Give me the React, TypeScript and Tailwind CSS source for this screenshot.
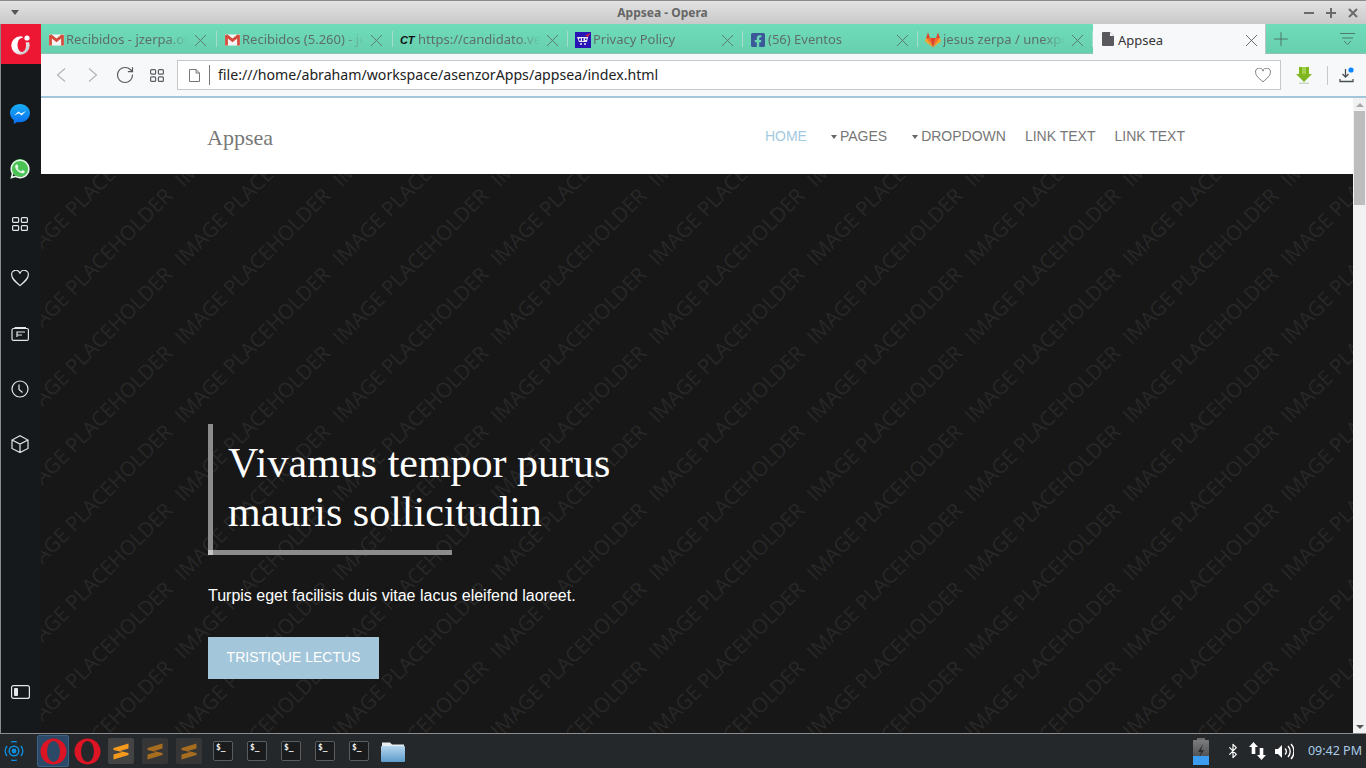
import { Bluetooth, Plus, RotateCw, X } from 'lucide-react'
import { FaFacebookSquare, FaWhatsapp } from 'react-icons/fa'

const chrome = "font-['Noto_Sans',sans-serif]"

function GmailIcon() {
  return (
    <svg width="15" height="12" viewBox="0 0 16 13">
      <rect x="0" y="0.5" width="16" height="12" fill="#f4f4f4" />
      <path d="M0 1 L2.5 .5 L8 5 L13.5 .5 L16 1 V12.5 H13 V5 L8 9 L3 5 V12.5 H0 Z" fill="#d54b3d" />
    </svg>
  )
}

function CtIcon() {
  return <span className="font-['Liberation_Sans',sans-serif] font-bold italic text-[11px] leading-none text-[#111] tracking-tight w-[16px]">CT</span>
}

function PrivacyIcon() {
  return (
    <svg width="16" height="16" viewBox="0 0 16 16">
      <rect width="16" height="16" fill="#2a13b4" />
      <path d="M2 5 H13 L12 10 H4 Z" fill="#e8e8f4" />
      <path d="M4 6.5 H6 V8.5 H4 Z M7 6 H8.5 V9 H7 Z M10 6.5 H11.5 V8 H10 Z" fill="#2a13b4" />
      <path d="M10 3.5 L15.5 1 L13 5 Z" fill="#d02a3c" />
      <circle cx="6" cy="12" r="1" fill="#e8e8f4" />
      <circle cx="10" cy="12" r="1" fill="#e8e8f4" />
    </svg>
  )
}

function GitlabIcon() {
  return (
    <svg width="16" height="16" viewBox="0 0 16 16">
      <polygon points="8,15.5 5,6 11,6" fill="#e24329" />
      <polygon points="8,15.5 5,6 1,6" fill="#fc6d26" />
      <polygon points="8,15.5 11,6 15,6" fill="#fc6d26" />
      <polygon points="1,6 0,9.2 8,15.5" fill="#fca326" />
      <polygon points="15,6 16,9.2 8,15.5" fill="#fca326" />
      <polygon points="1,6 3,.5 5,6" fill="#e24329" />
      <polygon points="15,6 13,.5 11,6" fill="#e24329" />
    </svg>
  )
}

function PageIcon({ fill = '#5a5a5e' }: { fill?: string }) {
  return (
    <svg width="12" height="14" viewBox="0 0 12 14" className="-mt-[3px]">
      <path d="M1 0 H8 L12 4 V13 a1 1 0 0 1 -1 1 H1 a1 1 0 0 1 -1 -1 V1 a1 1 0 0 1 1 -1 Z" fill={fill} />
      <path d="M8 0 V4 H12" fill="#f7f8fa" />
    </svg>
  )
}

const tabs = [
  { title: 'Recibidos - jzerpa.ocanto@gmail', icon: <GmailIcon />, w: 'w-[176px]' },
  { title: 'Recibidos (5.260) - jesus', icon: <GmailIcon />, w: 'w-[176px]' },
  { title: 'https://candidato.venezuela', icon: <CtIcon />, w: 'w-[175px]' },
  { title: 'Privacy Policy', icon: <PrivacyIcon />, w: 'w-[175px]' },
  { title: '(56) Eventos', icon: <FaFacebookSquare className="text-[#3b5998] w-[16px] h-[16px]" />, w: 'w-[175px]' },
  { title: 'jesus zerpa / unexpo-web', icon: <GitlabIcon />, w: 'w-[175px]' },
]

function Tab({ title, icon, w }: { title: string; icon: React.ReactNode; w: string }) {
  return (
    <div className={`${w} h-full flex items-center pl-[7px] pt-[3px] relative shrink-0`}>
      <div className="w-[16px] h-[16px] flex items-center justify-center shrink-0">{icon}</div>
      <div className="w-[122px] ml-[2px] text-[13px] text-[#5d6f68] whitespace-nowrap overflow-hidden [mask-image:linear-gradient(to_right,black_82%,transparent)]">{title}</div>
      <X className="ml-[2px] text-[#5c6f68] w-[21px] h-[21px] shrink-0" strokeWidth={1} />
      <div className="absolute right-0 top-[7px] h-[16px] w-px bg-[#a6dcc8]" />
    </div>
  )
}

function TabStrip() {
  return (
    <div className="h-[30px] flex bg-gradient-to-b from-[#70dcba] to-[#66cfae] border-b border-[#8fc4b2]">
      {tabs.map((t) => <Tab key={t.title} {...t} />)}
      <div className="w-[173px] h-[30px] bg-[#f7f8fa] flex items-center pl-[9px] pt-[3px] border-r border-[#b9c4c0] shrink-0">
        <PageIcon />
        <span className="ml-[4px] w-[123px] text-[13px] text-[#333]">Appsea</span>
        <X className="text-[#5a5a5a] w-[21px] h-[21px] shrink-0" strokeWidth={1} />
      </div>
      <div className="flex-1 flex items-center pl-[4px] pr-[11px] justify-between">
        <Plus className="text-[#4f6a60] w-[22px] h-[22px]" strokeWidth={1} />
        <svg width="15" height="14" viewBox="0 0 15 14" fill="none" stroke="#4f7a6b" strokeWidth="1">
          <path d="M0 1.5 H15 M2 6 H13 M4 9 L7.500 12.500 L11 9" />
        </svg>
      </div>
    </div>
  )
}

function Toolbar() {
  return (
    <div className="h-[42px] bg-[#f7f8fa] flex items-center pl-[4px]">
      <div className="w-[32px] flex justify-center">
        <svg width="10" height="14" viewBox="0 0 10 14" fill="none" stroke="#b0b5b8" strokeWidth="1.200"><path d="M9 .5 L1.500 7 L9 13.500" /></svg>
      </div>
      <div className="w-[32px] flex justify-center">
        <svg width="10" height="14" viewBox="0 0 10 14" fill="none" stroke="#b0b5b8" strokeWidth="1.200"><path d="M1 .5 L8.500 7 L1 13.500" /></svg>
      </div>
      <div className="w-[32px] flex justify-center"><RotateCw className="w-[20px] h-[20px] text-[#55595c]" strokeWidth={1.4} /></div>
      <div className="w-[32px] flex justify-center">
        <svg width="14" height="13" viewBox="0 0 14 13" fill="none" stroke="#5a5e62" strokeWidth="1.200">
          <rect x=".6" y=".6" width="5" height="4.600" rx="1" /><rect x="8.400" y=".6" width="5" height="4.600" rx="1" />
          <rect x=".6" y="7.800" width="5" height="4.600" rx="1" /><rect x="8.400" y="7.800" width="5" height="4.600" rx="1" />
        </svg>
      </div>
      <div className="ml-[4px] w-[1104px] h-[30px] bg-white border border-[#c6c9c9] flex items-center pl-[11px] pr-[9px]">
        <svg width="11" height="13" viewBox="0 0 11 13" fill="none" stroke="#777" strokeWidth="1">
          <path d="M.5 .5 H7 L10.500 4 V12.500 H.5 Z M7 .5 V4 H10.500" />
        </svg>
        <div className="w-px h-[20px] bg-[#777] ml-[9px]" />
        <span className="ml-[8px] mb-[1px] text-[14.150px] text-[#222] flex-1">file:///home/abraham/workspace/asenzorApps/appsea/index.html</span>
        <svg width="16" height="15" viewBox="0 0 24 22" fill="none" stroke="#6b6b6b" strokeWidth="1.300">
          <path d="M12 20.500 C5 14.500 1 11 1 6.800 A5.500 5.500 0 0 1 12 4.500 A5.500 5.500 0 0 1 23 6.800 C23 11 19 14.500 12 20.500 Z" />
        </svg>
      </div>
      <div className="w-[46px] flex justify-center">
        <svg width="16" height="17" viewBox="0 0 16 17">
          <path d="M3 0 H13 V7 H16 L8 15 L0 7 H3 Z" fill="#7fb521" />
          <path d="M6 0 H10 V7 H6 Z" fill="#a5cf4e" />
          <rect x="3" y="15.500" width="10" height="1.500" fill="#cfd6c0" />
        </svg>
      </div>
      <div className="w-px h-[19px] bg-[#c5c9c9]" />
      <div className="ml-[11px]">
        <svg width="15" height="16" viewBox="0 0 15 16" fill="none" stroke="#4a4f52" strokeWidth="1.300">
          <path d="M6.500 2 V10 M3.500 7 L6.500 10 L9.500 7 M1 12 V14.500 H14 V12" />
          <circle cx="12" cy="3" r="2.600" fill="#0a84ff" stroke="none" />
        </svg>
      </div>
    </div>
  )
}

const sideStroke = { fill: 'none', stroke: '#e4e6e7', strokeWidth: 1.2 }

function Sidebar() {
  return (
    <div className="w-[40px] ml-px bg-[#15191c] flex flex-col shrink-0">
      <div className="h-[40px] bg-[#ee1733] -mr-px pr-[2px] flex items-center justify-center">
        <svg width="20" height="21" viewBox="0 0 20 21">
          <defs><linearGradient id="om" x1="0" y1="0" x2="1" y2="1"><stop offset="0.5" stopColor="#ffffff" /><stop offset="1" stopColor="#a8a8a8" /></linearGradient></defs>
          <circle cx="9.500" cy="11.500" r="9.200" fill="url(#om)" />
          <ellipse cx="10.800" cy="11" rx="4.300" ry="7" fill="#ee1733" />
          <circle cx="16" cy="4" r="4.500" fill="#ee1733" />
          <circle cx="16" cy="4" r="2.600" fill="#fff" />
        </svg>
      </div>
      <div className="flex-1 flex flex-col items-center pt-[22px] pb-[14px] pr-[2px]">
        <div className="h-[55px] flex items-center">
          <svg width="20" height="20" viewBox="0 0 20 20">
            <defs><linearGradient id="ms" x1="0" y1="0" x2="0" y2="1"><stop offset="0" stopColor="#19aff5" /><stop offset="1" stopColor="#0a6cf0" /></linearGradient></defs>
            <path d="M10 0 C4.500 0 0 4 0 9 C0 12 1.500 14.500 3.800 16 V20 L7.300 18 C8.200 18.200 9 18.300 10 18.300 C15.500 18.300 20 14 20 9 C20 4 15.500 0 10 0 Z" fill="url(#ms)" />
            <path d="M4 11.500 L8.500 7.500 L11 9.500 L16 7 L11.500 11.500 L9 9.300 Z" fill="#fff" />
          </svg>
        </div>
        <div className="h-[55px] flex items-center relative">
          <div className="absolute left-[2px] top-[18px] w-[18px] h-[18px] rounded-full bg-[#48c354]" />
          <FaWhatsapp className="relative w-[22px] h-[22px] text-[#e8f5e9]" />
        </div>
        <div className="h-[55px] flex items-center">
          <svg width="16" height="14" viewBox="0 0 16 14" {...sideStroke}>
            <rect x=".6" y=".6" width="6" height="4.800" rx="1" /><rect x="9.400" y=".6" width="6" height="4.800" rx="1" />
            <rect x=".6" y="8.600" width="6" height="4.800" rx="1" /><rect x="9.400" y="8.600" width="6" height="4.800" rx="1" />
          </svg>
        </div>
        <div className="h-[55px] flex items-center">
          <svg width="18" height="17" viewBox="0 0 24 22" {...sideStroke} strokeWidth={1.600}>
            <path d="M12 20.500 C5 14.500 1 11 1 6.800 A5.500 5.500 0 0 1 12 4.500 A5.500 5.500 0 0 1 23 6.800 C23 11 19 14.500 12 20.500 Z" />
          </svg>
        </div>
        <div className="h-[55px] flex items-center">
          <svg width="18" height="14" viewBox="0 0 18 14" {...sideStroke}>
            <rect x="1" y="1.500" width="16.400" height="11.900" rx="1.500" />
            <path d="M3.500 .6 H15 M6 5 H14 M6 8 H11 M6 4.500 V10" />
          </svg>
        </div>
        <div className="h-[55px] flex items-center">
          <svg width="18" height="18" viewBox="0 0 18 18" {...sideStroke}>
            <circle cx="9" cy="9" r="8" /><path d="M8 4.500 V9.500 L11.500 12.500" />
          </svg>
        </div>
        <div className="h-[55px] flex items-center">
          <svg width="18" height="18" viewBox="0 0 18 18" {...sideStroke}>
            <path d="M9 .8 L17 5 V13.500 L9 17.500 L1 13.500 V5 Z M1 5 L9 9 L17 5 M9 9 V17.500" />
          </svg>
        </div>
        <div className="h-[55px] flex items-center mt-auto">
          <svg width="19" height="14" viewBox="0 0 19 14">
            <rect x=".6" y=".6" width="17.800" height="12.800" rx="2" fill="none" stroke="#e4e6e7" strokeWidth="1.200" />
            <rect x="3" y="3" width="4" height="8" rx="1" fill="#e4e6e7" />
          </svg>
        </div>
      </div>
    </div>
  )
}

function Placeholder() {
  const marks = []
  for (let c = -2; c < 10; c++) {
    for (let r = -1; r < 13; r++) {
      const x = 142.500 + c * 158
      const y = 92.700 + (r - 3) * 78.700
      marks.push(
        <text key={`${c}-${r}`} transform={`translate(${x} ${y}) rotate(-45)`} fontFamily="'Open Sans', sans-serif" fontSize="20.500" fill="#282828">IMAGE PLACEHOLDER</text>
      )
    }
  }
  return <svg className="absolute inset-0 w-full h-full">{marks}</svg>
}

function PageNav() {
  const link = "text-[14px] text-[#777] whitespace-nowrap"
  const caret = <span className="inline-block mr-[3px] mb-[2px] border-x-[3.500px] border-x-transparent border-t-[4px] border-t-[#666]" />
  return (
    <div className="h-[76px] bg-white flex justify-between font-['Liberation_Sans',sans-serif] pl-[167px] pr-[168px]">
      <div className="font-['Liberation_Serif',serif] text-[22px] text-[#777] pt-[23px] -ml-[1px]">Appsea</div>
      <div className="flex pt-[28px] h-fit">
        <span className="text-[14px] text-[#a3c9e0]">HOME</span>
        <span className={`${link} ml-[24px]`}>{caret}PAGES</span>
        <span className={`${link} ml-[25px]`}>{caret}DROPDOWN</span>
        <span className={`${link} ml-[19px]`}>LINK TEXT</span>
        <span className={`${link} ml-[19px]`}>LINK TEXT</span>
      </div>
    </div>
  )
}

function Hero() {
  return (
    <div className="flex-1 bg-[#171717] relative overflow-hidden flex flex-col justify-end pl-[167px] pb-[54px] font-['Liberation_Sans',sans-serif]">
      <Placeholder />
      <div className="relative w-[244px] h-[131px] border-l-[5px] border-b-[5px] border-[#8c8c8c] pl-[15px] pt-[15px]">
        <h1 className="w-[420px] font-['Liberation_Serif',serif] text-[42px] leading-[49px] text-white">Vivamus tempor purus mauris sollicitudin</h1>
        <div className="absolute -left-[5px] -bottom-[5px] w-[5px] h-[5px] bg-[#c5c5c5]" />
      </div>
      <p className="relative mt-[30px] text-[16px] leading-[22px] text-white">Turpis eget facilisis duis vitae lacus eleifend laoreet.</p>
      <div className="relative mt-[30px] w-[171px] h-[42px] bg-[#a3c6da] flex items-center justify-center pb-[2px] text-[14px] text-white">TRISTIQUE LECTUS</div>
    </div>
  )
}

function Scrollbar() {
  return (
    <div className="w-[13px] bg-[#f2f2f2] flex flex-col items-center">
      <div className="h-[13px] flex items-center"><span className="border-x-[4px] border-x-transparent border-b-[4px] border-b-[#a8a8a8]" /></div>
      <div className="w-[11px] h-[94px] bg-[#bdbdbd]" />
      <div className="mt-auto h-[13px] flex items-center"><span className="border-x-[4px] border-x-transparent border-t-[4px] border-t-[#555]" /></div>
    </div>
  )
}

function OperaMark({ inner }: { inner: string }) {
  return (
    <svg width="27" height="27" viewBox="0 0 27 27">
      <circle cx="13.500" cy="13.500" r="13" fill="#dc1424" />
      <ellipse cx="13.500" cy="13.500" rx="6.500" ry="10.500" fill={inner} />
    </svg>
  )
}

function SublimeTile({ active }: { active?: boolean }) {
  return (
    <div className={`w-[26px] h-[26px] rounded-[2px] flex items-center justify-center mr-[8px] ${active ? 'bg-[#434343]' : 'bg-[#363636]'}`}>
      <svg width="16" height="17" viewBox="0 0 16 17" fill={active ? '#f59a1d' : '#a66c20'}>
        <path d="M.5 5 L15.500 .5 V5.500 L7 8 L15.500 10 V12 L.5 16.500 V11.500 L9 9 L.5 7 Z" />
      </svg>
    </div>
  )
}

function Terminal() {
  return (
    <div className="w-[20px] h-[20px] rounded-[2px] bg-[#1a1b1c] border border-[#5a5c5e] mr-[14px] pl-[2px] text-[8px] leading-[11px] font-bold text-[#eee] font-['DejaVu_Sans_Mono',monospace]">$_</div>
  )
}

function Taskbar() {
  return (
    <div className={`h-[35px] bg-[#25282b] border-t border-[#8d8d8d] flex items-center ${chrome}`}>
      <div className="w-[28px] flex justify-center">
        <svg width="20" height="20" viewBox="0 0 20 20" fill="none" stroke="#0f8fe0" strokeWidth="1.300">
          <circle cx="10" cy="10" r="1.800" fill="#0f8fe0" />
          <circle cx="10" cy="10" r="4.800" strokeWidth="1.500" />
          <path d="M3 5 A8.500 8.500 0 0 0 3 15 M17 5 A8.500 8.500 0 0 1 17 15 M7 1 A9.500 9.500 0 0 1 13 1 M7 19 A9.500 9.500 0 0 0 13 19" />
        </svg>
      </div>
      <div className="w-[9px]" />
      <div className="w-[32px] h-[32px] bg-[#2c4a68] border border-[#3a6288] rounded-[2px] flex items-center justify-center">
        <OperaMark inner="#2c4a68" />
      </div>
      <div className="w-[36px] flex justify-center"><OperaMark inner="#25282b" /></div>
      <div className="flex ml-[3px]">
        <SublimeTile active /><SublimeTile /><SublimeTile />
      </div>
      <div className="flex ml-[3px]">
        <Terminal /><Terminal /><Terminal /><Terminal /><Terminal />
      </div>
      <svg width="24" height="21" viewBox="0 0 24 21" className="-ml-[2px]">
        <defs><linearGradient id="fold" x1="0" y1="0" x2="0" y2="1"><stop offset="0" stopColor="#b6d6ee" /><stop offset="1" stopColor="#5c9ccb" /></linearGradient></defs>
        <path d="M1 1.500 H9 L11 3.500 H23 V7 H1 Z" fill="#e8eef2" />
        <rect y="5" width="24" height="16" rx="1" fill="url(#fold)" />
      </svg>
      <div className="flex-1" />
      <svg width="18" height="27" viewBox="0 0 18 27">
        <defs><linearGradient id="bat" x1="0" y1="0" x2="0" y2="1"><stop offset="0" stopColor="#7a7c7e" /><stop offset="1" stopColor="#3a3c3e" /></linearGradient></defs>
        <rect x="5" y="0" width="8" height="2" fill="#6a6c6e" />
        <rect x="1" y="2" width="16" height="25" rx="1" fill="url(#bat)" />
        <rect x="1" y="18" width="16" height="9" fill="#3b9cf0" />
        <path d="M11 6 L6 14 H9 L7.500 19 L12 12 H9 Z" fill="#2a2c2e" />
      </svg>
      <Bluetooth className="ml-[15px] w-[16px] h-[18px] text-white" strokeWidth={1.800} />
      <svg width="17" height="18" viewBox="0 0 17 18" fill="#fff" className="ml-[8px]">
        <path d="M4.500 0 L9 5 H6.300 V12 H2.700 V5 H0 Z M12.500 18 L8 13 H10.700 V6 H14.300 V13 H17 Z" />
      </svg>
      <svg width="19" height="17" viewBox="0 0 19 17" className="ml-[9px]" fill="none" stroke="#fff" strokeWidth="1.400">
        <path d="M0 6 H3 L7 2 V15 L3 11 H0 Z" fill="#fff" stroke="none" />
        <path d="M10 5.500 A4 4 0 0 1 10 11.500 M13 3 A8 8 0 0 1 13 14 M16 1 A11 11 0 0 1 16 16" />
      </svg>
      <span className="ml-[14px] mr-[4px] text-[12.500px] text-[#a8cbe6] whitespace-nowrap">09:42 PM</span>
    </div>
  )
}

export default function App() {
  return (
    <div className={`w-[1366px] h-[768px] overflow-hidden flex flex-col bg-[#8a8a8a] ${chrome}`}>
      <div className="h-[24px] flex items-center bg-gradient-to-b from-[#e2e2e2] to-[#c9c9c9] border-t border-[#8a8a8a] shrink-0">
        <div className="w-[30px] flex justify-center"><span className="border-x-[4px] border-x-transparent border-t-[5px] border-t-[#555]" /></div>
        <div className="flex-1 text-center text-[12px] font-bold text-[#666]">Appsea - Opera</div>
        <div className="w-[71px] flex items-center gap-[12px] pl-[9px] text-[#666]">
          <svg width="10" height="10" viewBox="0 0 10 10"><rect y="4" width="10" height="2" fill="#6a6a6a" /></svg>
          <svg width="10" height="10" viewBox="0 0 10 10"><path d="M4 0 H6 V4 H10 V6 H6 V10 H4 V6 H0 V4 H4 Z" fill="#6a6a6a" /></svg>
          <svg width="10" height="10" viewBox="0 0 10 10"><path d="M1 1 L9 9 M9 1 L1 9" stroke="#6a6a6a" strokeWidth="2" /></svg>
        </div>
      </div>
      <div className="flex-1 flex min-h-0">
        <Sidebar />
        <div className="flex-1 flex flex-col min-w-0">
          <TabStrip />
          <Toolbar />
          <div className="h-[2px] bg-[#a3c5d9]" />
          <div className="flex-1 flex min-h-0">
            <div className="flex-1 flex flex-col min-w-0">
              <PageNav />
              <Hero />
            </div>
            <Scrollbar />
          </div>
        </div>
      </div>
      <Taskbar />
    </div>
  )
}
